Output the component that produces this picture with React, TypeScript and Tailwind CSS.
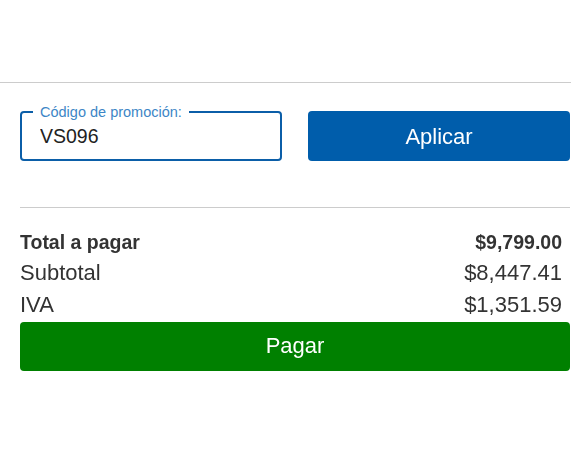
import { useState } from "react";

export default function App() {
  const [code, setCode] = useState("VS096");

  return (
    <div className="w-[588px] h-[476px] bg-white font-['Liberation_Sans',Arial,sans-serif] text-[#333]">
      <div className="w-[571px] pt-[82px]">
        <div className="border-t border-[#cccccc]" />

        <div className="pl-5 pr-px">
          {/* Promo code */}
          <div className="grid grid-cols-[262px_262px] items-end gap-[26px] mt-[21px]">
            <fieldset className="w-[262px] min-w-0 border-2 border-[#0b5ea8] rounded-[4px] px-[11px] pb-[7px]">
              <legend className="px-[7px] text-[14.5px] leading-[16px] text-[#3d86c6]">
                Código de promoción:
              </legend>
              <input
                className="block w-full min-w-0 h-[32px] px-[7px] bg-transparent outline-none text-[19.5px] text-[#222] caret-[#0b5ea8]"
                type="text"
                size={1}
                aria-label="Código de promoción"
                value={code}
                onChange={(e) => setCode(e.target.value)}
                autoFocus
              />
            </fieldset>
            <button
              className="h-[50px] rounded-[4px] bg-[#005dab] text-white text-[22px]"
              type="button"
            >
              Aplicar
            </button>
          </div>

          <div className="mt-[46px] border-t border-[#cccccc]" />

          {/* Totals */}
          <div className="mt-5 pr-2">
            <div className="flex justify-between h-[29px] leading-[29px] text-[19.5px] font-bold">
              <span>Total a pagar</span>
              <span>$9,799.00</span>
            </div>
            <div className="flex justify-between h-[32px] leading-[32px] text-[22px]">
              <span>Subtotal</span>
              <span>$8,447.41</span>
            </div>
            <div className="flex justify-between h-[32px] leading-[32px] text-[22px]">
              <span>IVA</span>
              <span>$1,351.59</span>
            </div>
          </div>
          <button
            className="block w-full mt-px h-[49px] pb-[3px] rounded-[4px] bg-[#008000] text-white text-[22px]"
            type="button"
          >
            Pagar
          </button>
        </div>
      </div>
    </div>
  );
}
